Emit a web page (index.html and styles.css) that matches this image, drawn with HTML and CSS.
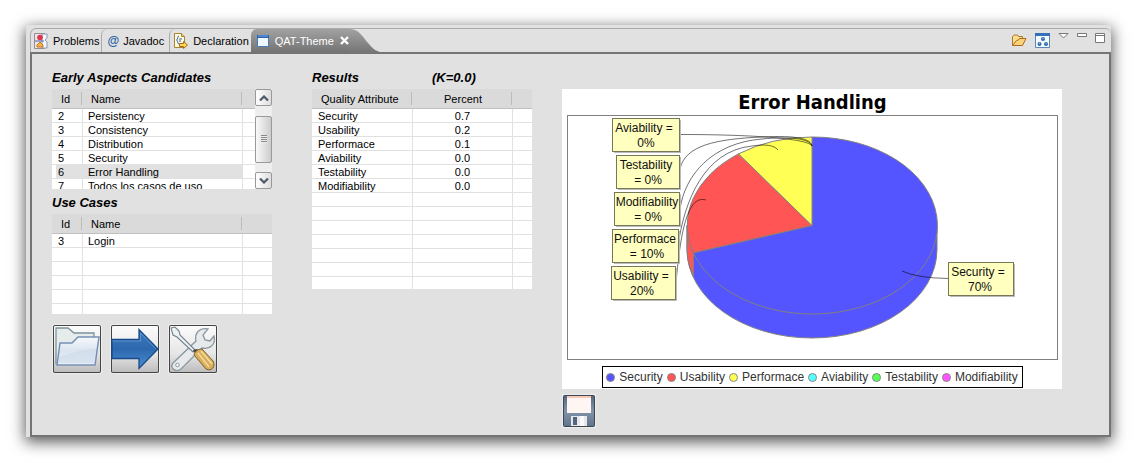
FILE: index.html
```html
<!DOCTYPE html>
<html lang="en">
<head>
<meta charset="utf-8">
<title>QAT-Theme</title>
<link rel="stylesheet" href="styles.css">
</head>
<body>
<main class="window">
  <header class="tabbar">
    <nav class="tabs">
      <button class="tab" type="button">
        <svg class="icon" width="14" height="16" viewBox="0 0 14 16"><path d="M.5.5h10v15H.5z" fill="#e8e4ee" stroke="#9a8a8a"/><path d="M8 1h5v4l-2 2 2 2v6H8z" fill="#f6f8fc" stroke="#8a9ab8"/><path d="M1 8h9" stroke="#4a68a8"/><circle cx="6" cy="4.500" r="2.800" fill="#dc3545"/><path d="M3 14v-2l3-3 3 3v2z" fill="#f7b445" stroke="#c9781c"/></svg>
        Problems
      </button>
      <button class="tab tab-javadoc" type="button"><span class="at">@</span>Javadoc</button>
      <button class="tab tab-declaration" type="button">
        <svg class="icon" width="14" height="16" viewBox="0 0 14 16"><path d="M.5.5h7l3 3v11H.5z" fill="#fffbe8" stroke="#a8842c"/><path d="M7.500.500v3h3" fill="#f1d070" stroke="#a8842c"/><path d="M5 3C3 3 4.500 6 2.500 7 4.500 8 3 11 5 11M5 6h3M5 8h2" fill="none" stroke="#39679e"/><path d="M5.500 10.500h4v-2l4 3.500-4 3.500v-2h-4z" fill="#ffd65a" stroke="#a96a10"/></svg>
        Declaration
      </button>
      <button class="tab tab-active" type="button">
        <svg class="icon" width="12" height="12" viewBox="0 0 12 12"><path d="M.5.5h11v11H.5z" fill="#eef8ff" stroke="#4b7cb6"/><path d="M0 0h12v3H0z" fill="#2862b5"/><path d="M1 1h10" stroke="#79aae8"/></svg>
        QAT-Theme
        <svg class="close" width="9" height="9" viewBox="0 0 9 9"><path d="M1 1l7 7M8 1L1 8" stroke="#fff" stroke-width="2.400"/></svg>
      </button>
      <svg class="tail" width="34" height="24" viewBox="0 0 34 24"><defs><linearGradient id="tail" x2="0" y2="1"><stop stop-color="#a2a2a2"/><stop offset="1" stop-color="#747474"/></linearGradient></defs><path d="M0 0C10 0 13 7 19 14S27 22 34 24H0z" fill="url(#tail)"/></svg>
    </nav>
    <div class="tools">
      <button type="button" aria-label="Open"><svg width="16" height="14" viewBox="0 0 16 14"><path d="M1.500 12.500v-9l2-1.500h3l1 1.500h4v3" fill="#f8dd8c" stroke="#b0752a"/><path d="M1.500 12.500l4-5 2-.5 1-1.500h6.500L11.500 12.500z" fill="#fbd37b" stroke="#b0681c"/></svg></button>
      <button type="button" aria-label="Theme"><svg width="15" height="15" viewBox="0 0 15 15"><path d="M.5.5h14v14H.5z" fill="#f3faff" stroke="#5a85b4"/><path d="M0 0h15v3H0z" fill="#356fb8"/><g fill="#2e66a8"><circle cx="8" cy="6" r="2"/><circle cx="4.500" cy="11" r="2"/><circle cx="11" cy="11" r="2"/></g><g fill="#9cc4ee"><circle cx="8" cy="5.500" r=".7"/><circle cx="4.500" cy="10.500" r=".7"/><circle cx="11" cy="10.500" r=".7"/></g></svg></button>
      <button type="button" aria-label="View menu"><svg width="11" height="6" viewBox="0 0 11 6"><path d="M1 .5h9L5.500 5z" fill="#fff" stroke="#777"/></svg></button>
      <button type="button" aria-label="Minimize"><svg width="10" height="4" viewBox="0 0 10 4"><path d="M.5.5h9v3h-9z" fill="#fff" stroke="#777"/></svg></button>
      <button type="button" aria-label="Maximize"><svg width="10" height="10" viewBox="0 0 10 10"><path d="M.5.5h9v9h-9zM0 2.500h10" fill="#fff" stroke="#777"/></svg></button>
    </div>
  </header>

  <div class="content">
    <section class="column">
      <h2 class="heading">Early Aspects Candidates</h2>
      <div class="scrollpane">
        <div class="tablebox">
          <table class="grid">
            <colgroup><col class="c-id"><col class="c-name"><col></colgroup>
            <thead><tr><th>Id</th><th>Name</th><th></th></tr></thead>
            <tbody>
              <tr><td>2</td><td>Persistency</td><td></td></tr>
              <tr><td>3</td><td>Consistency</td><td></td></tr>
              <tr><td>4</td><td>Distribution</td><td></td></tr>
              <tr><td>5</td><td>Security</td><td></td></tr>
              <tr class="selected"><td>6</td><td>Error Handling</td><td></td></tr>
              <tr><td>7</td><td>Todos los casos de uso</td><td></td></tr>
            </tbody>
          </table>
        </div>
        <div class="scrollbar">
          <button class="arrow" type="button" aria-label="Scroll up"><svg width="10" height="6" viewBox="0 0 10 6"><path d="M1 5.500l4-4 4 4" fill="none" stroke="#4d5a68" stroke-width="2.200"/></svg></button>
          <div class="thumb"><span class="grip"></span></div>
          <button class="arrow" type="button" aria-label="Scroll down"><svg width="10" height="6" viewBox="0 0 10 6"><path d="M1 .5l4 4 4-4" fill="none" stroke="#4d5a68" stroke-width="2.200"/></svg></button>
        </div>
      </div>
      <h2 class="heading heading-next">Use Cases</h2>
      <div class="tablebox">
        <table class="grid">
          <colgroup><col class="c-id"><col class="c-name"><col></colgroup>
          <thead><tr><th>Id</th><th>Name</th><th></th></tr></thead>
          <tbody>
            <tr><td>3</td><td>Login</td><td></td></tr>
            <tr><td></td><td></td><td></td></tr>
            <tr><td></td><td></td><td></td></tr>
            <tr><td></td><td></td><td></td></tr>
            <tr><td></td><td></td><td></td></tr>
            <tr><td></td><td></td><td></td></tr>
          </tbody>
        </table>
      </div>
      <div class="actions">
        <button class="action" type="button" aria-label="Open folder">
          <svg width="48" height="48" viewBox="0 0 48 48"><defs><linearGradient id="fold" x2="0" y2="1"><stop stop-color="#f4f8fc"/><stop offset=".5" stop-color="#dbe5f0"/><stop offset="1" stop-color="#e9f0f8"/></linearGradient></defs><path d="M3 39V3h12l6 5h20v6" fill="#e6ebec" stroke="#7f929c" stroke-width="1.300"/><path d="M4 40L7 18h12l6-6h21l-4 28z" fill="url(#fold)" stroke="#7890b4" stroke-width="1.500"/><path d="M6 31C18 30 28 23 43 24l-2 14H5z" fill="#c9d7e8" opacity=".5"/></svg>
        </button>
        <button class="action" type="button" aria-label="Run">
          <svg width="48" height="48" viewBox="0 0 48 48"><defs><linearGradient id="arr" x2="0" y2="1"><stop stop-color="#3f78bc"/><stop offset=".5" stop-color="#2d68ae"/><stop offset="1" stop-color="#4d8fd2"/></linearGradient></defs><path d="M1 14.500h27v-10L47 24 28 43.500v-10H1z" fill="url(#arr)" stroke="#164a8a" stroke-width="1.300"/><path d="M1.500 16h28V8L45 24" fill="none" stroke="#5e92d0"/></svg>
        </button>
        <button class="action" type="button" aria-label="Settings">
          <svg width="48" height="48" viewBox="0 0 48 48"><path d="M4 38L27 16C25 8 31 2 39 4l-5 6 2 5 5 1 4-5c2 8-4 14-12 12L12 44c-5 4-12-1-8-6z" fill="#e6eaec" stroke="#8b979e" stroke-width="1.300"/><circle cx="8.500" cy="40" r="1.800" fill="#fff" stroke="#8b979e"/><path d="M2 3l4-1 4 4 1 4 15 15-2 2L8 12l-4-2z" fill="#edf2f5" stroke="#71808a" stroke-width="1.100"/><path d="M24 25l4-1 3 3-4 3z" fill="#444"/><path d="M25 30c1-4 4-6 8-6l11 12c3 5-1 11-7 8z" fill="#d9ae5d" stroke="#80602b"/><path d="M29 28l11 14M32 26l11 13" stroke="#f5dc9e" stroke-width="1.500"/></svg>
        </button>
      </div>
    </section>

    <section class="column">
      <div class="headrow"><h2 class="heading">Results</h2><h2 class="heading">(K=0.0)</h2></div>
      <div class="tablebox tablebox-tall">
        <table class="grid grid-results">
          <colgroup><col class="c-attr"><col class="c-pct"><col></colgroup>
          <thead><tr><th>Quality Attribute</th><th>Percent</th><th></th></tr></thead>
          <tbody>
            <tr><td>Security</td><td>0.7</td><td></td></tr>
            <tr><td>Usability</td><td>0.2</td><td></td></tr>
            <tr><td>Performace</td><td>0.1</td><td></td></tr>
            <tr><td>Aviability</td><td>0.0</td><td></td></tr>
            <tr><td>Testability</td><td>0.0</td><td></td></tr>
            <tr><td>Modifiability</td><td>0.0</td><td></td></tr>
            <tr><td></td><td></td><td></td></tr>
            <tr><td></td><td></td><td></td></tr>
            <tr><td></td><td></td><td></td></tr>
            <tr><td></td><td></td><td></td></tr>
            <tr><td></td><td></td><td></td></tr>
            <tr><td></td><td></td><td></td></tr>
            <tr><td></td><td></td><td></td></tr>
          </tbody>
        </table>
      </div>
    </section>

    <section class="chartcol">
      <figure class="chart">
        <h1 class="title">Error Handling</h1>
        <svg class="plot" viewBox="0 0 491 245">
          <rect x=".5" y=".5" width="490" height="244" fill="#fff" stroke="#808080"/>
          <g stroke="#808080" stroke-linejoin="round">
            <path d="M120 110.500V134.500A125 88.500 0 0 0 370 134.500V110.500z" fill="#55f"/>
            <path d="M120 110.500V134.500A125 88.500 0 0 0 126.500 161.800V137.800z" fill="#f55"/>
            <path d="M245 110.500V22A125 88.500 0 1 1 126.500 137.800z" fill="#55f"/>
            <path d="M245 110.500L171.500 38.900A125 88.500 0 0 0 126.500 137.800z" fill="#f55"/>
            <path d="M245 110.500V22A125 88.500 0 0 0 171.500 38.900z" fill="#ff5"/>
          </g>
          <g fill="none" stroke="#000" stroke-opacity=".55">
            <path d="M113 19.500C190 19.500 242 24 245 31"/>
            <path d="M113 54C118 30 150 24 195 22C230 20 244 24 245 31"/>
            <path d="M113 94C118 60 145 28 195 24C225 21 243 24 245 31"/>
            <path d="M111 131C117 88 136 36 185 31C198 29 207 30 211 35"/>
            <path d="M109 168C114 110 122 80 139 85"/>
            <path d="M335 156Q350 163 381 163.500"/>
          </g>
          <g fill="#bbb">
            <rect x="47" y="5" width="67" height="33"/><rect x="51" y="42" width="63" height="33"/><rect x="49" y="79" width="65" height="33"/>
            <rect x="47" y="116" width="66" height="33"/><rect x="46" y="153" width="64" height="33"/><rect x="383" y="149" width="65" height="33"/>
          </g>
          <g fill="#ffffc0" stroke="#77775a">
            <rect x="45.500" y="3.500" width="67" height="33"/><rect x="49.500" y="40.500" width="63" height="33"/><rect x="47.500" y="77.500" width="65" height="33"/>
            <rect x="45.500" y="114.500" width="66" height="33"/><rect x="44.500" y="151.500" width="64" height="33"/><rect x="381.500" y="147.500" width="65" height="33"/>
          </g>
          <g class="labels">
            <text x="77" y="17">Aviability =</text><text x="79" y="32">0%</text>
            <text x="79" y="54">Testability</text><text x="81" y="69">= 0%</text>
            <text x="80" y="91">Modifiability</text><text x="81" y="106">= 0%</text>
            <text x="78" y="128">Performace</text><text x="80" y="143">= 10%</text>
            <text x="74" y="165">Usability =</text><text x="75" y="180">20%</text>
            <text x="411" y="161">Security =</text><text x="413" y="176">70%</text>
          </g>
        </svg>
        <ul class="legend">
          <li><i class="dot dot-blue"></i>Security</li>
          <li><i class="dot dot-red"></i>Usability</li>
          <li><i class="dot dot-yellow"></i>Performace</li>
          <li><i class="dot dot-cyan"></i>Aviability</li>
          <li><i class="dot dot-green"></i>Testability</li>
          <li><i class="dot dot-magenta"></i>Modifiability</li>
        </ul>
      </figure>
      <button class="save" type="button" aria-label="Save">
        <svg width="32" height="32" viewBox="0 0 32 32"><defs><linearGradient id="disk" x2="0" y2="1"><stop stop-color="#52677d"/><stop offset=".5" stop-color="#8294aa"/><stop offset="1" stop-color="#5f738b"/></linearGradient></defs><rect x=".5" y=".5" width="31" height="31" rx="1" fill="url(#disk)" stroke="#3b4653"/><path d="M4 1h24v17H4z" fill="#fff5f3"/><path d="M4 1h24v2H4z" fill="#f8c8b8"/><path d="M8 21h16v10H8z" fill="#e8e8e8"/><path d="M10 22h4v8h-4z" fill="#50667f"/><path d="M17 21h4v10h-4z" fill="#fafafa"/></svg>
      </button>
    </section>
  </div>
</main>
</body>
</html>
```
FILE: styles.css
```css
* { box-sizing: border-box; }

body {
  margin: 0;
  padding: 25px 26px 26px;
  background: #fff;
  color: #000;
  font: 11px/14px "Liberation Sans", Arial, sans-serif;
}

button {
  margin: 0;
  padding: 0;
  border: 0;
  background: none;
  color: inherit;
  font: inherit;
}

svg { display: block; }

h1, h2, ul, figure { margin: 0; padding: 0; }

.window {
  padding: 3px 0 0 4px;
  background: #e1e1e1;
  box-shadow: 0 4px 14px 1px rgba(0, 0, 0, .65);
}

.tabbar {
  display: flex;
  justify-content: space-between;
  height: 24px;
  border-top: 1px solid #aaa;
  border-radius: 6px 6px 0 0;
}

.tabs { display: flex; }

.tab {
  display: flex;
  align-items: center;
  gap: 5px;
  padding: 0 2px 0 3px;
  border-left: 1px solid #aaa;
  border-radius: 6px 0 0 0;
}

.tab-javadoc { gap: 4px; padding: 0 5px; }
.tab-declaration { padding-left: 4px; }

.at { color: #2b63a5; font-size: 12px; font-weight: bold; }

.tab-active {
  gap: 6px;
  padding: 0 0 0 6px;
  border: 0;
  background: linear-gradient(#a2a2a2, #747474);
  color: #fff;
}

.tools {
  display: flex;
  align-items: flex-start;
  gap: 8px;
  padding: 4px 6px 0 0;
}

.content {
  display: flex;
  align-items: flex-start;
  padding: 16px 20px 8px;
  border: 2px solid #747474;
}

.column { flex: 0 1 220px; margin-right: 40px; }

.column + .chartcol { margin-left: -10px; }

.heading {
  margin-bottom: 3px;
  font: italic bold 13px/16px "Liberation Sans", Arial, sans-serif;
}

.heading-next { margin-top: 6px; }

.headrow { display: grid; grid-template-columns: 120px 1fr; }

.tablebox {
  flex: 1;
  height: 100px;
  overflow: hidden;
  background: #fff;
}

.tablebox-tall { height: 200px; }

.grid {
  width: 100%;
  table-layout: fixed;
  border-collapse: separate;
  border-spacing: 0;
}

.c-id { width: 31px; }
.c-name { width: 160px; }
.c-attr { width: 101px; }
.c-pct { width: 100px; }

.grid th {
  height: 20px;
  padding: 0 0 0 8px;
  border-bottom: 1px solid #c0c0c0;
  background: linear-gradient(#bbb, #bbb) right 1px top 3px / 1px 13px no-repeat #dadada;
  font-weight: normal;
  text-align: left;
}

.grid th:first-child { padding-left: 9px; }
.grid th:last-child { background: #dadada; }

.grid td {
  height: 14px;
  padding: 1px 0 0 5px;
  border-right: 1px solid #e1e1e1;
  border-bottom: 1px solid #e1e1e1;
  line-height: 12px;
  white-space: nowrap;
}

.grid td:first-child { padding-left: 6px; }
.grid td:last-child { border-right: 0; }

.grid-results th:nth-child(2),
.grid-results td:nth-child(2) { padding-left: 0; text-align: center; }

.selected td { background: #e1e1e1; }
.selected td:first-child { background: linear-gradient(90deg, #fff 4px, #e1e1e1 4px); }
.selected td:last-child { background: #fff; }

.scrollpane { display: flex; }

.scrollbar {
  display: flex;
  flex-direction: column;
  justify-content: space-between;
  width: 17px;
  background: #eee;
}

.arrow, .thumb {
  display: flex;
  align-items: center;
  justify-content: center;
  height: 17px;
  border: 1px solid #999;
  border-radius: 2px;
  background: linear-gradient(90deg, #fff, #ddd);
}

.thumb {
  height: 47px;
  background: linear-gradient(90deg, #fafafa, #ccc);
}

.grip {
  width: 6px;
  height: 8px;
  background: repeating-linear-gradient(#888 0 1px, #eee 1px 2px);
}

.actions { display: flex; gap: 10px; padding: 11px 1px 0; }

.action {
  width: 48px;
  height: 48px;
  border-radius: 2px;
  background: linear-gradient(#fcfcfc, #e6e6e6 60%, #bbb);
  box-shadow: inset 0 0 0 1px #444, 0 0 0 1px #eee;
}

.chartcol { flex: 0 1 500px; padding-top: 19px; }

.chart { padding: 0 4px 1px 5px; background: #fff; }

.title {
  font: bold 20px/26px "DejaVu Sans Condensed", "DejaVu Sans", sans-serif;
  text-align: center;
}

.plot { width: 100%; }

.labels {
  fill: #111;
  font: 12px "Liberation Sans", Arial, sans-serif;
  text-anchor: middle;
}

.legend {
  display: flex;
  width: max-content;
  margin: 6px auto 0;
  gap: 4px;
  padding: 0 4px 0 3px;
  border: 1px solid #000;
  color: #333;
  font-size: 12px;
  line-height: 20px;
  list-style: none;
}

.legend li { display: flex; align-items: center; gap: 4px; }

.dot {
  width: 9px;
  height: 9px;
  border: 1px solid #888;
  border-radius: 50%;
}

.dot-blue { background: #55f; }
.dot-red { background: #f55; }
.dot-yellow { background: #ff5; }
.dot-cyan { background: #5ff; }
.dot-green { background: #5f5; }
.dot-magenta { background: #f5f; }

.save { display: block; margin: 6px 0 0 1px; box-shadow: 0 0 0 1px #eee; }
```
